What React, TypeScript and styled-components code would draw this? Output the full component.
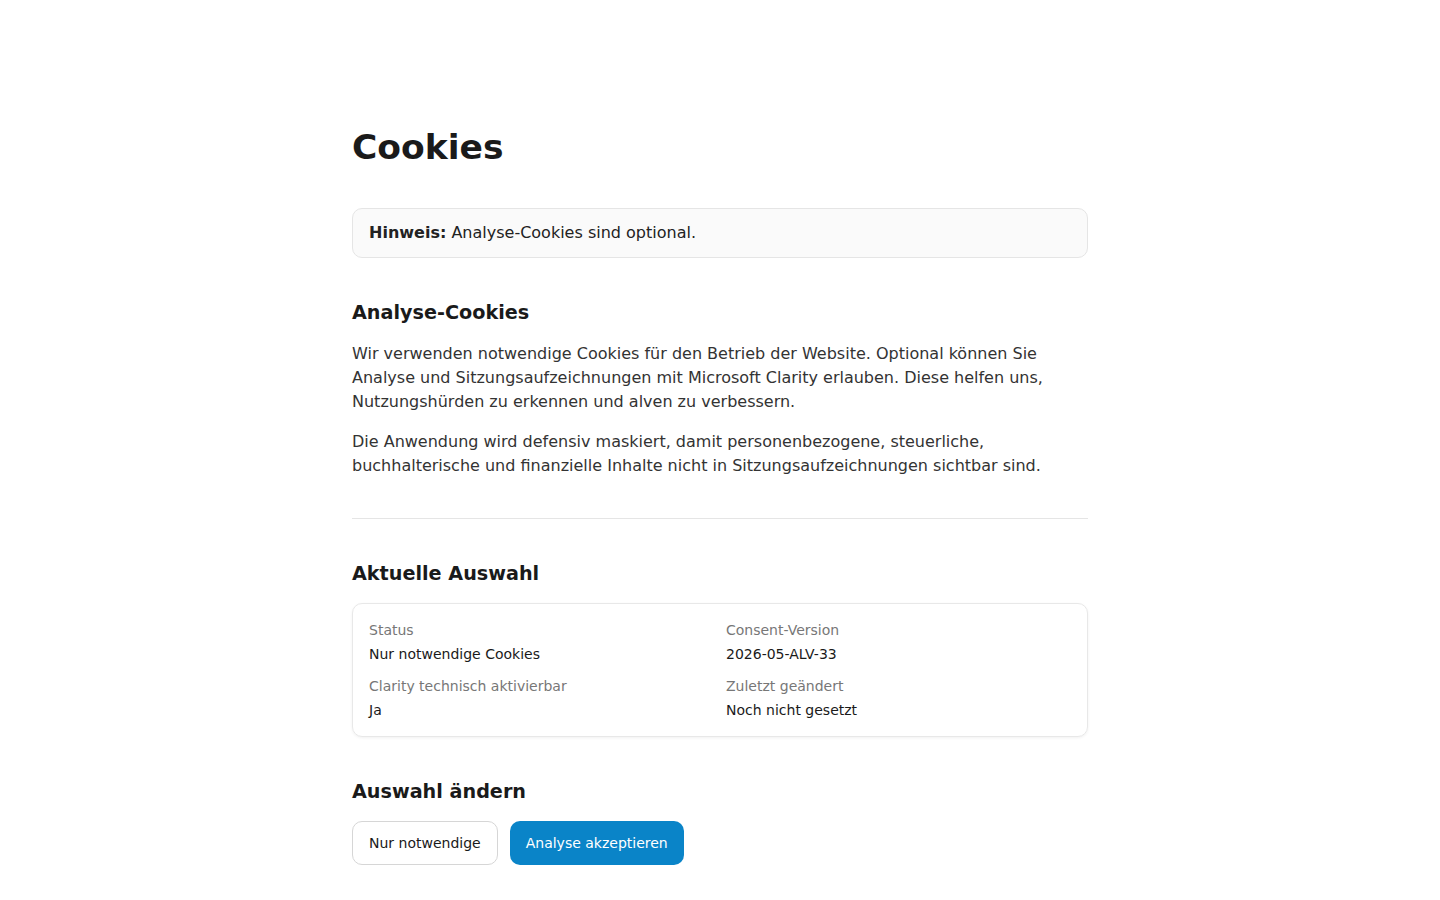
import styled, { createGlobalStyle } from "styled-components";

const GlobalStyle = createGlobalStyle`
  * { box-sizing: border-box; }
  body {
    margin: 0;
    background: #fff;
    color: #1a1a1a;
    font-family: "DejaVu Sans", Verdana, sans-serif;
  }
`;

const Page = styled.main`
  width: 736px;
  margin: 0 auto;
  padding: 127px 0 40px;
`;

const Title = styled.h1`
  margin: 0 0 40px;
  font-size: 34.5px;
  line-height: 1.2;
  font-weight: 700;
  color: #1a1a1a;
`;

const Notice = styled.div`
  background: #fafafa;
  border: 1px solid #e5e5e5;
  border-radius: 10px;
  padding: 12px 16px;
  font-size: 16px;
  line-height: 24px;
  color: #222;

  & strong {
    font-weight: 700;
  }
`;

const Section = styled.section<{ $divider?: boolean }>`
  padding: ${(p) => (p.$divider ? "0 0 40px" : "0")};
  border-bottom: ${(p) => (p.$divider ? "1px solid #e5e5e5" : "none")};
`;

const Heading = styled.h2`
  margin: 43px 0 16px;
  font-size: 19.2px;
  line-height: 1.3;
  font-weight: 700;
  color: #1a1a1a;
`;

const Paragraph = styled.p`
  margin: 0 0 16px;
  font-size: 16px;
  line-height: 24px;
  color: #333;

  &:last-child {
    margin-bottom: 0;
  }
`;

const Card = styled.div`
  display: grid;
  grid-template-columns: 1fr 1fr;
  column-gap: 12px;
  row-gap: 12px;
  padding: 16px;
  border: 1px solid #e8e8e8;
  border-radius: 10px;
  box-shadow: 0 1px 3px rgba(0, 0, 0, 0.06);
`;

const Field = styled.div`
  display: flex;
  flex-direction: column;
  gap: 4px;
`;

const Label = styled.span`
  font-size: 14px;
  line-height: 20px;
  color: #777;
`;

const Value = styled.span`
  font-size: 14px;
  line-height: 20px;
  color: #1a1a1a;
`;

const Actions = styled.div`
  display: flex;
  gap: 12px;
`;

const Button = styled.button<{ $primary?: boolean }>`
  height: 44px;
  padding: 0 16px;
  border-radius: 10px;
  font-family: inherit;
  font-size: 14px;
  cursor: pointer;
  border: ${(p) => (p.$primary ? "0" : "1px solid #d6d6d6")};
  background: ${(p) => (p.$primary ? "#0a84c8" : "#fff")};
  color: ${(p) => (p.$primary ? "#fff" : "#1a1a1a")};
`;

const fields = [
  { label: "Status", value: "Nur notwendige Cookies" },
  { label: "Consent-Version", value: "2026-05-ALV-33" },
  { label: "Clarity technisch aktivierbar", value: "Ja" },
  { label: "Zuletzt geändert", value: "Noch nicht gesetzt" },
];

export default function App() {
  return (
    <>
      <GlobalStyle />
      <Page>
        <Title>Cookies</Title>
        <Notice>
          <strong>Hinweis:</strong> Analyse-Cookies sind optional.
        </Notice>

        <Section $divider>
          <Heading>Analyse-Cookies</Heading>
          <Paragraph>
            Wir verwenden notwendige Cookies für den Betrieb der Website. Optional können Sie
            Analyse und Sitzungsaufzeichnungen mit Microsoft Clarity erlauben. Diese helfen uns,
            Nutzungshürden zu erkennen und alven zu verbessern.
          </Paragraph>
          <Paragraph>
            Die Anwendung wird defensiv maskiert, damit personenbezogene, steuerliche,
            buchhalterische und finanzielle Inhalte nicht in Sitzungsaufzeichnungen sichtbar sind.
          </Paragraph>
        </Section>

        <Section>
          <Heading>Aktuelle Auswahl</Heading>
          <Card>
            {fields.map((f) => (
              <Field key={f.label}>
                <Label>{f.label}</Label>
                <Value>{f.value}</Value>
              </Field>
            ))}
          </Card>
        </Section>

        <Section>
          <Heading>Auswahl ändern</Heading>
          <Actions>
            <Button>Nur notwendige</Button>
            <Button $primary>Analyse akzeptieren</Button>
          </Actions>
        </Section>
      </Page>
    </>
  );
}
